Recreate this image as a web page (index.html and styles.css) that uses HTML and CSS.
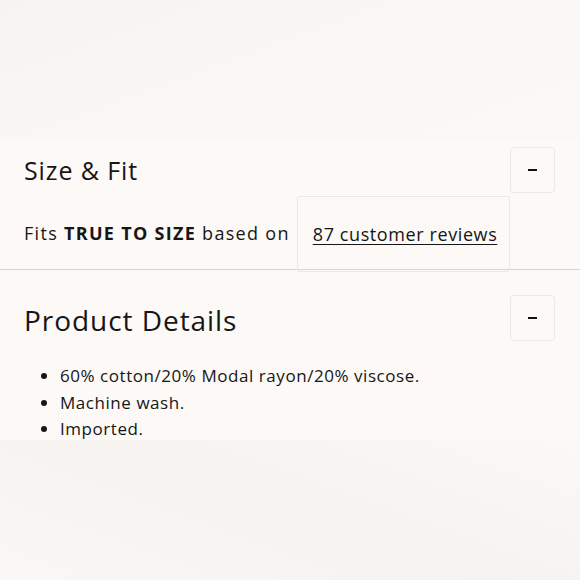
FILE: index.html
```html
<!DOCTYPE html>
<html>
<head>
<meta charset="utf-8">
<link rel="stylesheet" href="styles.css">
</head>
<body>
<div class="page">
  <div class="backdrop backdrop-top"></div>
  <div class="panel">
    <section class="acc acc-size">
      <div class="acc-head">
        <h2 class="acc-title">Size &amp; Fit</h2>
        <button class="toggle" aria-label="collapse"><span class="minus"></span></button>
      </div>
      <div class="fit-row">
        <span class="fit-text">Fits <strong>TRUE TO SIZE</strong> based on</span>
        <div class="review-box"><a class="review-link" href="#">87 customer reviews</a></div>
      </div>
    </section>
    <section class="acc acc-details">
      <div class="acc-head">
        <h2 class="acc-title title-lg">Product Details</h2>
        <button class="toggle" aria-label="collapse"><span class="minus"></span></button>
      </div>
      <ul class="details">
        <li>60% cotton/20% Modal rayon/20% viscose.</li>
        <li>Machine wash.</li>
        <li>Imported.</li>
      </ul>
    </section>
  </div>
  <div class="backdrop backdrop-bottom"></div>
</div>
</body>
</html>
```
FILE: styles.css
```css
* { box-sizing: border-box; }
html, body { margin: 0; padding: 0; }
body {
  background: #f8f5f2;
  font-family: "Open Sans", Lato, sans-serif;
  color: #161616;
}
.page {
  width: 580px;
  height: 580px;
  display: flex;
  flex-direction: column;
  overflow: hidden;
}
.backdrop { flex: none; }
.backdrop-top {
  height: 140px;
  background: linear-gradient(160deg, #f6f3f0 0%, #f9f6f3 40%, #fbf8f5 100%);
}
.backdrop-bottom {
  flex: 1;
  background: linear-gradient(200deg, #fbf8f5 0%, #f5f2ef 50%, #faf7f4 100%);
}
.panel {
  background: #fcf9f6;
  height: 300px;
}
.acc-head {
  display: flex;
  align-items: center;
  justify-content: space-between;
  padding: 0 25px 0 24px;
}
.acc-size .acc-head { padding-top: 7px; }
.acc-details .acc-head { padding-top: 25px; }
.acc-title {
  margin: 0;
  font-weight: 400;
  font-size: 25px;
  letter-spacing: 0.9px;
}
.title-lg { font-size: 28px; letter-spacing: 0.95px; padding-top: 3px; }
.toggle {
  width: 45px;
  height: 46px;
  border: 1px solid #ece8e4;
  border-radius: 4px;
  background: #fcf9f6;
  display: flex;
  align-items: center;
  justify-content: center;
  padding: 0;
}
.minus {
  display: block;
  width: 9px;
  height: 2px;
  background: #111;
}
.fit-row {
  display: flex;
  align-items: center;
  padding-left: 24px;
  margin-top: 3px;
  height: 74px;
  border-bottom: 1px solid #d8d5d2;
  font-size: 18px;
}
.fit-text { letter-spacing: 1.3px; }
.fit-text strong { font-weight: 700; }
.review-box {
  margin-left: 7px;
  align-self: stretch;
  height: 76px;
  width: 213px;
  border: 1px solid #ebe7e3;
  border-radius: 3px;
  display: flex;
  align-items: center;
  padding-left: 15px;
}
.review-link {
  color: #161616;
  text-decoration: underline;
  text-underline-offset: 3px;
  letter-spacing: 0.6px;
}
.details {
  margin: 22px 0 0;
  padding-left: 60px;
  font-size: 17px;
  line-height: 26.5px;
  letter-spacing: 0.55px;
}
.details li { padding-left: 0; }
```
